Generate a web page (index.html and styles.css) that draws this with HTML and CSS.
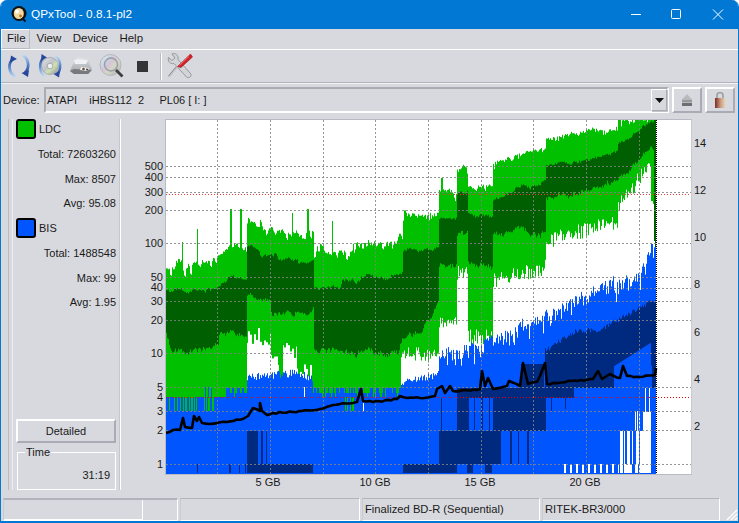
FILE: index.html
```html
<!DOCTYPE html>
<html lang="en">
<head>
<meta charset="utf-8">
<title>QPxTool - 0.8.1-pl2</title>
<link rel="stylesheet" href="styles.css">
</head>
<body>
<div class="window">
  <header class="titlebar">
    <svg class="app-icon" width="18" height="18" viewBox="0 0 18 18">
      <circle cx="9" cy="8.5" r="7.5" fill="#111"/>
      <ellipse cx="8.8" cy="8.5" rx="5" ry="5.6" fill="#f3d9a0"/>
      <circle cx="7" cy="6.5" r="2" fill="#fff"/>
      <circle cx="10.5" cy="11" r="1.4" fill="#b97a28"/>
      <path d="M12 13l3.5 3.5" stroke="#111" stroke-width="2"/>
    </svg>
    <span class="title">QPxTool - 0.8.1-pl2</span>
    <div class="winctl">
      <svg width="40" height="29" viewBox="0 0 40 29"><path d="M15 14.5h10" stroke="#fff"/></svg>
      <svg width="40" height="29" viewBox="0 0 40 29"><rect x="15.5" y="9.500" width="9" height="9" rx="1" fill="none" stroke="#fff"/></svg>
      <svg width="42" height="29" viewBox="0 0 42 29"><path d="M17 9.500l10 10M27 9.500l-10 10" stroke="#fff"/></svg>
    </div>
  </header>

  <nav class="menubar">
    <span class="menu menu-active">File</span>
    <span class="menu">View</span>
    <span class="menu">Device</span>
    <span class="menu">Help</span>
  </nav>

  <div class="toolbar">
    <svg class="tool" width="26" height="28" viewBox="0 0 26 28">
      <defs>
        <linearGradient id="arcA" x1="0" y1="0" x2="0" y2="1"><stop offset="0" stop-color="#28479c"/><stop offset=".5" stop-color="#5f8fd0"/><stop offset="1" stop-color="#c2daf2"/></linearGradient>
        <linearGradient id="arcB" x1="0" y1="0" x2="0" y2="1"><stop offset="0" stop-color="#c2daf2"/><stop offset=".5" stop-color="#5f8fd0"/><stop offset="1" stop-color="#28479c"/></linearGradient>
      </defs>
      <path d="M7 7C2 11 2 20 9 25" fill="none" stroke="url(#arcA)" stroke-width="2.800"/>
      <path d="M4 10.500L5 3.500 11 7z" fill="#28479c"/>
      <path d="M17 3C23 7 24 16 19 20.500" fill="none" stroke="url(#arcB)" stroke-width="2.800"/>
      <path d="M23 18L22 25 15.500 21z" fill="#28479c"/>
    </svg>
    <svg class="tool tool-disc" width="26" height="28" viewBox="0 0 26 28">
      <defs>
        <linearGradient id="discG" x1="0" y1="0" x2="1" y2="1"><stop offset="0" stop-color="#e4e6ea"/><stop offset=".45" stop-color="#bfc2c6"/><stop offset=".6" stop-color="#cfe2b4"/><stop offset="1" stop-color="#8f9297"/></linearGradient>
      </defs>
      <circle cx="13" cy="14" r="8.500" fill="url(#discG)" stroke="#8d9097" stroke-width=".6"/>
      <circle cx="13" cy="14" r="2.800" fill="#eef0f2" stroke="#84878d" stroke-width=".6"/>
      <path d="M7 5.500C2 9 1.500 19 7 24" fill="none" stroke="url(#arcA)" stroke-width="2.400"/>
      <path d="M4 8.500L4.500 2 10 5.500z" fill="#28479c"/>
      <path d="M18.500 4C24.500 8 24.500 18 20 22" fill="none" stroke="url(#arcB)" stroke-width="2.400"/>
      <path d="M23 19L22 25.500 16.500 22z" fill="#28479c"/>
    </svg>
    <svg class="tool tool-drive" width="26" height="28" viewBox="0 0 26 28">
      <defs>
        <linearGradient id="driveG" x1="0" y1="0" x2="0" y2="1"><stop offset="0" stop-color="#e2e4e7"/><stop offset="1" stop-color="#9a9da1"/></linearGradient>
      </defs>
      <path d="M4 14L9 5 22 6.500 21 11 24 17 20 22 6 22 2 19z" fill="url(#driveG)"/>
      <path d="M6 8L10 7 20 8 18 12 7 12z" fill="#eef0f3"/>
      <path d="M2 19L6 17 20 18 24 18 20 22 6 22z" fill="#77797d"/>
      <path d="M13 15l8 1-2 3-7-1z" fill="#f1f2f3"/>
      <circle cx="15.500" cy="17" r="1.300" fill="#6a4a33"/>
      <circle cx="19" cy="17.500" r="1" fill="#3c3c3c"/>
    </svg>
    <svg class="tool tool-lens" width="26" height="28" viewBox="0 0 26 28">
      <defs>
        <linearGradient id="lensG" x1="0" y1="0" x2="1" y2="1"><stop offset="0" stop-color="#f0f1f2"/><stop offset=".3" stop-color="#c6d5e6"/><stop offset=".45" stop-color="#d8c4d6"/><stop offset=".6" stop-color="#d4d7c8"/><stop offset="1" stop-color="#aeb0b3"/></linearGradient>
      </defs>
      <circle cx="11.500" cy="13" r="10.500" fill="url(#lensG)" stroke="#b4b6ba"/>
      <circle cx="12" cy="12.500" r="6.500" fill="none" stroke="#9a9da2" stroke-width="1.400"/>
      <path d="M17 18l6.500 6.500" stroke="#3d3f42" stroke-width="2.800"/>
    </svg>
    <svg class="tool-stop" width="11" height="11" viewBox="0 0 11 11"><rect width="11" height="11" fill="#333537"/></svg>
    <span class="tool-sep"></span>
    <svg class="tool tool-fix" width="26" height="28" viewBox="0 0 26 28">
      <path d="M10 15L1.500 25" stroke="#c4c6c9" stroke-width="2.600"/>
      <path d="M9 15L1.500 24" stroke="#7b7e82" stroke-width=".8"/>
      <path d="M1.500 5.500L5 8.500 8 6 5 2C8.500 .5 12 3.500 11 7.500L23.500 21.500C25.500 24 22 27 19.500 25L7 11.500C3 12.500 .5 9 1.500 5.500z" fill="#d2d4d7" stroke="#85888c" stroke-width=".8"/>
      <path d="M10.500 14.500L21 4.500 23.500 2 25.500 5 14 15.500z" fill="#cf2027" stroke="#a31b20" stroke-width=".6"/>
      <path d="M12.500 13.500L22 4.500" stroke="#ee6a6a" stroke-width="1"/>
    </svg>
  </div>

  <div class="devicebar">
    <span class="device-label">Device:</span>
    <div class="combo">
      <span class="combo-text">ATAPI    iHBS112  2     PL06 [ I: ]</span>
      <span class="combo-arrow"><svg width="9" height="5" viewBox="0 0 9 5"><path d="M0 0h9L4.500 5z" fill="#111"/></svg></span>
    </div>
    <button class="icon-btn" type="button" aria-label="Eject">
      <svg width="12" height="12" viewBox="0 0 12 12"><path d="M6 0l4.500 5h-9z" fill="#b8babd"/><rect x="1" y="5.500" width="10" height="3" fill="#96989c"/><rect x="1" y="9" width="10" height="3" fill="#6c6e72"/></svg>
    </button>
    <button class="icon-btn" type="button" aria-label="Lock">
      <svg width="12" height="16" viewBox="0 0 12 16">
        <defs><linearGradient id="lockG" x1="0" y1="0" x2="1" y2="0"><stop offset="0" stop-color="#7c2c20"/><stop offset=".55" stop-color="#c99a80"/><stop offset="1" stop-color="#e6d5b0"/></linearGradient></defs>
        <path d="M3 7V3.500a3 3 0 0 1 6 0V7" fill="none" stroke="#9b9da0" stroke-width="1.600"/>
        <rect x="1" y="6" width="10" height="10" fill="url(#lockG)"/>
      </svg>
    </button>
  </div>

  <main class="content">
    <aside class="side">
      <div class="legend"><span class="swatch swatch-ldc"></span><span>LDC</span></div>
      <div class="stats">
        <div class="stat">Total: 72603260</div>
        <div class="stat">Max: 8507</div>
        <div class="stat">Avg: 95.08</div>
      </div>
      <div class="legend"><span class="swatch swatch-bis"></span><span>BIS</span></div>
      <div class="stats">
        <div class="stat">Total: 1488548</div>
        <div class="stat">Max: 99</div>
        <div class="stat">Avg: 1.95</div>
      </div>
      <div class="side-fill"></div>
      <button class="detail-btn" type="button">Detailed</button>
      <fieldset class="time-box">
        <legend>Time</legend>
        <div class="time-value">31:19</div>
      </fieldset>
    </aside>

    <section class="chart">
      <div class="plot"><canvas id="plot" width="525" height="354"></canvas></div>
      <span class="yl" style="top:159px">500</span>
      <span class="yl" style="top:170px">400</span>
      <span class="yl" style="top:185px">300</span>
      <span class="yl" style="top:203px">200</span>
      <span class="yl" style="top:236px">100</span>
      <span class="yl" style="top:270px">50</span>
      <span class="yl" style="top:280px">40</span>
      <span class="yl" style="top:294px">30</span>
      <span class="yl" style="top:313px">20</span>
      <span class="yl" style="top:346px">10</span>
      <span class="yl" style="top:380px">5</span>
      <span class="yl" style="top:390px">4</span>
      <span class="yl" style="top:404px">3</span>
      <span class="yl" style="top:423px">2</span>
      <span class="yl" style="top:457px">1</span>
      <span class="yr" style="top:136px">14</span>
      <span class="yr" style="top:183px">12</span>
      <span class="yr" style="top:230px">10</span>
      <span class="yr" style="top:277px">8</span>
      <span class="yr" style="top:325px">6</span>
      <span class="yr" style="top:372px">4</span>
      <span class="yr" style="top:419px">2</span>
      <span class="xl" style="left:268px">5 GB</span>
      <span class="xl" style="left:375px">10 GB</span>
      <span class="xl" style="left:480px">15 GB</span>
      <span class="xl" style="left:585px">20 GB</span>
    </section>
  </main>

  <footer class="statusbar">
    <div class="cell cell-a"><span class="cell-inner"></span></div>
    <div class="cell cell-b"></div>
    <div class="cell cell-c">Finalized BD-R (Sequential)</div>
    <div class="cell cell-d">RITEK-BR3/000</div>
    <svg class="grip" width="14" height="14" viewBox="0 0 14 14"><path d="M13 3L3 13M13 7L7 13M13 11L11 13" stroke="#fff" stroke-width="1.300"/></svg>
  </footer>
</div>
<script src="chart.js"></script>
</body>
</html>
```

FILE: styles.css
```css
* { box-sizing: border-box; }
html, body { margin: 0; padding: 0; background: #fff; }
body {
  width: 739px;
  height: 523px;
  overflow: hidden;
  font-family: "Liberation Sans", Arial, sans-serif;
  font-size: 11px;
  color: #1a1a1a;
}
.window {
  width: 739px;
  height: 523px;
  display: flex;
  flex-direction: column;
  background: #d8d9de;
  border: 1px solid #0078d4;
  border-top: 0;
  border-bottom-width: 2px;
  border-radius: 7px 7px 0 0;
  overflow: hidden;
}
.titlebar {
  height: 29px;
  flex: none;
  display: flex;
  align-items: center;
  background: #0078d4;
  color: #fff;
  padding-left: 9px;
}
.app-icon { margin-top: -1px; }
.title { margin-left: 3px; font-size: 11.8px; color: #fff; margin-top: -1px; }
.winctl { margin-left: auto; display: flex; }
.winctl svg { display: block; }

.menubar {
  height: 21px;
  flex: none;
  display: flex;
  align-items: stretch;
  border-bottom: 1px solid #fff;
  font-size: 11.5px;
}
.menu { padding: 3px 5.75px 0; }
.menu-active {
  border: 1px solid #fff;
  border-right-color: #b9bbc4;
  border-bottom-color: #b9bbc4;
  padding: 2px 5px 0 5px;
  width: 29px;
  margin-right: 0;
}
.menu-active + .menu { padding-left: 6.5px; }
.toolbar {
  height: 33px;
  flex: none;
  display: flex;
  align-items: center;
  padding-left: 5px;
  border-bottom: 1px solid #b2b4bd;
}
.tool { display: block; flex: none; margin-right: 5px; filter: blur(.35px); }
.tool-stop { display: block; flex: none; margin-left: 12px; filter: blur(.3px); }
.tool-lens { margin-right: 0; }
.tool-sep { width: 1px; height: 27px; background: #fff; box-shadow: -1px 0 0 #b9bbc4; margin: 0 5px 0 13px; }
.devicebar {
  height: 33px;
  flex: none;
  display: flex;
  align-items: center;
  padding: 0 3px 0 2px;
  border-top: 1px solid #f2f2f4;
}
.device-label { width: 41px; }
.combo {
  width: 626px;
  height: 26px;
  display: flex;
  align-items: center;
  border: 2px solid;
  border-color: #a9abb5 #fff #fff #a9abb5;
  padding-left: 1px;
}
.combo-text { flex: 1; white-space: pre; }
.combo-arrow {
  width: 16px;
  height: 22px;
  display: flex;
  align-items: center;
  justify-content: center;
  border: 1px solid;
  border-color: #fff #a9abb5 #a9abb5 #fff;
  box-shadow: 1px 1px 0 #c2c4cc;
}
.icon-btn {
  width: 30px;
  height: 26px;
  margin-left: 3px;
  padding: 0;
  display: flex;
  align-items: center;
  justify-content: center;
  background: #d8d9de;
  border: 2px solid;
  border-color: #fff #a9abb5 #a9abb5 #fff;
}
.content { flex: 1; display: flex; position: relative; min-height: 0; }
.side {
  width: 113px;
  margin: 3px 0 7px 7px;
  display: flex;
  flex-direction: column;
  border-left: 1px solid #b9bbc4;
  border-right: 1px solid #fff;
  box-shadow: inset 3px 0 0 #d8d9de, inset 4px 0 0 #eeeef1, inset -1px 0 0 #c4c6ce;
  padding: 0 3px 0 7px;
}
.legend { display: flex; align-items: center; gap: 3px; height: 20px; flex: none; }
.swatch {
  width: 20px;
  height: 20px;
  border: 2px solid #000;
  border-radius: 3px;
  flex: none;
}
.swatch-ldc { background: #00c000; }
.swatch-bis { background: #0055ff; }
.stats { padding: 3px 0 2.5px; flex: none; }
.stat { height: 24.5px; line-height: 24.5px; text-align: right; padding-right: 1px; }
.side-fill { flex: 1; }
.detail-btn {
  width: 100px;
  height: 24px;
  font: inherit;
  color: inherit;
  padding: 0;
  background: #d8d9de;
  border: 2px solid;
  border-color: #fff #a9abb5 #a9abb5 #fff;
  flex: none;
  margin-bottom: 3px;
}
.time-box {
  width: 99px;
  height: 44px;
  margin: 0 0 0 1px;
  padding: 0 5px;
  border: 1px solid #fff;
  flex: none;
}
.time-box legend { padding: 0 1px; margin-left: 2px; line-height: 12px; font-size: 11px; }
.time-value { text-align: right; margin-top: 11px; }
.chart { flex: 1; position: relative; }
.plot {
  position: absolute;
  left: 44px;
  top: 3px;
  width: 527px;
  height: 356px;
  border: 1px solid #b9bbc4;
  border-right-color: #c8cad1;
  background: #fff;
}
.plot canvas { display: block; }
.yl, .yr, .xl { position: absolute; line-height: 13px; }
.yl { left: 0; width: 42px; text-align: right; margin-top: -115px; }
.yr { left: 573px; margin-top: -115px; }
.xl { top: 360px; margin-left: -121px; transform: translateX(-50%); }
.statusbar {
  height: 24px;
  flex: none;
  display: flex;
  gap: 2px;
  padding: 1px 0 0 2px;
  position: relative;
  align-items: stretch;
}
.cell {
  border: 1px solid;
  border-color: #b2b4bd #fff #fff #c8cad1;
  line-height: 20px;
  padding-left: 2px;
  font-size: 11.2px;
}
.cell-a { width: 175px; display: flex; padding: 0; border-top-width: 2px; }
.cell-inner { width: 139px; border-right: 1px solid #fff; border-bottom: 1px solid #fff; }
.cell-b { width: 180px; }
.cell-c { width: 178px; }
.cell-d { width: 178px; }
.grip { position: absolute; right: 0; bottom: 0; }
```

FILE: chart.js
```js
(function () {
  var c = document.getElementById('plot');
  var g = c.getContext('2d');
  var OX = 166, OY = 119, S = 12345;
  g.translate(-OX, -OY);

  function rnd() { S = (S * 1664525 + 1013904223) >>> 0; return S / 4294967296; }
  function at(p, x) {
    if (x <= p[0][0]) return p[0][1];
    for (var i = 1; i < p.length; i++) {
      if (x <= p[i][0]) {
        var a = p[i - 1], b = p[i];
        return a[1] + (b[1] - a[1]) * (x - a[0]) / Math.max(1, b[0] - a[0]);
      }
    }
    return p[p.length - 1][1];
  }
  function col(color, x, y0, y1) { g.fillStyle = color; g.fillRect(x, y0, 1, y1 - y0); }

  var GREEN = '#00c000', DGREEN = '#005f00', BLUE = '#0055ff', DBLUE = '#002a80';
  var END = 656;

  var LT = [[166,270],[169,262],[176,256],[215,258],[220,243],[229,245],[246,246],[247,218],[260,215],[266,228],[313,230],[314,255],[320,240],[327,248],[352,248],[353,240],[380,238],[402,232],[403,213],[438,214],[439,192],[456,192],[457,167],[467,167],[468,187],[492,187],[493,166],[545,150],[546,138],[617,127],[618,119],[656,119]];
  var LB = [[166,396],[246,396],[247,327],[259,327],[260,332],[270,332],[271,353],[278,353],[279,396],[282,396],[283,341],[296,341],[297,363],[311,363],[312,396],[400,396],[401,345],[420,345],[438,350],[439,312],[456,312],[457,263],[467,263],[468,328],[492,328],[493,272],[545,258],[546,232],[617,212],[618,198],[650,155],[651,180],[653,200],[656,200]];
  var DT = [[166,287],[218,288],[229,278],[246,278],[247,245],[258,245],[260,252],[277,252],[278,257],[297,257],[298,260],[313,260],[314,287],[340,287],[342,278],[360,278],[361,275],[393,275],[402,270],[403,247],[438,247],[439,218],[456,218],[457,193],[467,193],[468,215],[492,215],[493,198],[545,180],[546,165],[617,150],[618,142],[650,122],[656,119]];
  var DB = [[166,328],[172,348],[218,345],[219,335],[246,335],[247,293],[270,296],[271,310],[313,310],[314,350],[398,350],[402,335],[420,328],[438,302],[439,265],[456,265],[457,235],[467,235],[468,265],[492,265],[493,232],[545,232],[546,198],[617,178],[650,148],[656,148]];
  var BT = [[166,396],[226,396],[227,387],[246,387],[247,372],[300,368],[312,375],[313,387],[400,387],[401,377],[438,370],[439,355],[460,352],[493,338],[530,322],[553,312],[583,295],[600,285],[640,278],[650,262],[656,248]];

  var spikes = { 182: 241, 197: 228, 230: 208, 231: 208, 240: 208, 241: 208, 292: 212, 307: 208, 308: 208, 332: 220, 441: 177, 442: 177, 511: 160 };

  g.fillStyle = '#fff';
  g.fillRect(OX, OY, 525, 354);

  var x, t, b, n, held = 0, holdB = 0, walk = 0, walkD = 0, walkB = 0;
  // light green band
  for (x = OX; x < END; x++) {
    n = x < 247 ? 22 : (x < 403 ? 11 : (x < 546 ? 8 : 6));
    walk = walk * .86 + (rnd() - .5) * (x < 403 ? 6 : 3);
    if (x % 2 === 0 || x > 403) { held = rnd() * rnd() * n; holdB = rnd() * 16; }
    t = at(LT, x) + held + walk - (x > 403 ? 3 : 0);
    if (spikes[x]) t = spikes[x];
    b = at(LB, x) + (at(LB, x) < 390 ? holdB : 0);
    col(GREEN, x, Math.max(OY, t), b);
  }
  // dark green band
  for (x = OX; x < END; x++) {
    walkD = walkD * .8 + (rnd() - .5) * 3;
    t = at(DT, x) + walkD + rnd() * 2;
    b = at(DB, x) + walkD * 1.5 + rnd() * 3;
    if (x > 218 && x < 246 && rnd() < .03) b += 30;
    col(DGREEN, x, Math.max(OY, t), b);
  }
  // tail of the run
  col(GREEN, 651, 180, 200); col(GREEN, 652, 180, 200); col(GREEN, 653, 170, 202);
  col(DGREEN, 654, 119, 240); col(DGREEN, 655, 119, 250);

  // blue band
  g.fillStyle = BLUE;
  g.fillRect(OX, 410, END - OX, 63);
  for (x = OX; x < END; x++) {
    var v = at(BT, x);
    if (x < 227) {
      // mixed green/blue ticks just above the solid blue
      col(BLUE, x, 396, 410);
      if (rnd() < .28 && x < 216) col(GREEN, x, 396, 410);
      if (x > 196 && rnd() < .22) col(BLUE, x, 386, 396);
    } else if (x < 247 || (x > 312 && x < 401)) {
      col(BLUE, x, 396, 410);
      if (x > 342 && x < 354 && rnd() < .3) col(GREEN, x, 396, 410);
      if (rnd() < .55) col(BLUE, x, 387, 396);
      else if (rnd() < .7) col(BLUE, x, 392, 396);
    } else {
      walkB = walkB * .85 + (rnd() - .5) * 5;
      var j = x > 440 ? rnd() * rnd() * 24 + walkB : rnd() * 8;
      col(BLUE, x, v + j - (x > 440 ? 6 : 0), 410);
    }
  }
  col(BLUE, 651, 243, 300); col(BLUE, 652, 243, 300);
  col('#fff', 304, 386, 396); col('#fff', 363, 402, 410);

  // dark blue upper band
  var UT = [[457,387],[520,387],[521,363],[543,363],[544,387],[545,347],[560,337],[577,327],[597,327],[617,317],[650,298],[656,298]];
  var UB = [[457,397],[535,397],[536,405],[545,397],[573,397],[574,387],[613,387],[614,365],[650,342],[652,387],[656,387]];
  for (x = 457; x < END; x++) {
    t = at(UT, x);
    b = at(UB, x);
    if (x > 545) t += rnd() * 5;
    col(DBLUE, x, t, b);
  }
  // dark blue blocks near the bottom
  var R = [
    [247,258,430,472],[258,313,463,472],[197,198,463,472],[229,231,463,472],[239,240,463,472],[245,246,463,472],
    [261,263,430,463],[266,267,430,463],[403,420,463,472],[420,457,463,472],[439,500,430,463],[457,467,397,430],
    [493,546,397,430],[467,473,463,472],[485,492,463,472],[500,501,430,463],[510,512,430,463],
    [518,519,430,463],[527,529,430,463],[467,469,397,430],[474,475,397,430],[481,483,397,430],[489,490,397,430],
    [441,442,397,430],[551,552,397,410],[565,566,397,408]
  ];
  R.forEach(function (r) { g.fillStyle = DBLUE; g.fillRect(r[0], r[2], r[1] - r[0], r[3] - r[2]); });

  // white gaps at the end of the disc
  for (x = 560; x < 652; x++) {
    if (x >= 640 && x < 651) { col('#fff', x, 430, 472); if (x > 642) col('#fff', x, 411, 430); continue; }
    if (x < 640 && x % 6 < 2 && rnd() < .8) col('#fff', x, 463, 472);
    if (x > 618 && rnd() < .35) col('#fff', x, 430, 463);
    if (x > 630 && rnd() < .4) col('#fff', x, 410, 430);
    if (x >= 620 && x < 640 && rnd() < .6) col('#fff', x, 463, 472);
  }
  col('#fff', 645, 387, 411); col('#fff', 649, 387, 411);

  // grid: crisp dots, not anti-aliased dashes
  function hdots(y, color, period, w) {
    g.fillStyle = color;
    for (var i = OX; i < OX + 525; i += period) g.fillRect(i, y, w, 1);
  }
  function vdots(vx, color, period, h, y1) {
    g.fillStyle = color;
    for (var i = OY; i < y1; i += period) g.fillRect(vx, i, 1, h);
  }
  var GRID = 'rgba(130,130,130,.85)';
  [165, 176, 191, 209, 242, 276, 287, 300, 319, 352, 386, 410, 429, 463].forEach(function (y) {
    hdots(y, GRID, 4, 2);
  });
  [217, 270, 323, 375, 428, 481, 533, 586, 639].forEach(function (vx) {
    vdots(vx, GRID, 4, 2, OY + 354);
  });
  hdots(193, '#f33', 3, 1);
  hdots(396, '#e00', 3, 1);
  vdots(END, '#000', 2, 1, 473);

  // jitter line
  var P = [[166,432],[173,429],[180,429],[183,417],[185,426],[192,427],[194,415],[197,420],[199,416],[202,422],[210,423],[227,421],[243,418],[248,415],[253,407],[260,410],[260,402],[262,410],[267,414],[273,412],[293,411],[320,408],[333,404],[353,402],[357,401],[361,388],[363,400],[373,401],[397,398],[400,395],[407,397],[420,397],[435,395],[437,388],[442,385],[445,392],[450,385],[453,390],[480,388],[482,370],[485,385],[488,377],[493,388],[507,385],[509,380],[520,385],[523,362],[528,383],[537,381],[540,375],[545,362],[547,383],[593,378],[598,370],[602,378],[610,373],[620,377],[623,365],[627,375],[640,376],[655,374],[656,367]];
  g.strokeStyle = '#000';
  g.lineWidth = 2.6;
  g.lineJoin = 'round';
  g.beginPath();
  P.forEach(function (p, i) {
    if (!i) { g.moveTo(p[0], p[1]); return; }
    var q = P[i - 1], steps = Math.floor((p[0] - q[0]) / 3);
    for (var k = 1; k < steps; k++) {
      var f = k / steps;
      g.lineTo(q[0] + (p[0] - q[0]) * f, q[1] + (p[1] - q[1]) * f + (rnd() - .5) * 1.6);
    }
    g.lineTo(p[0], p[1]);
  });
  g.stroke();
}());
```
